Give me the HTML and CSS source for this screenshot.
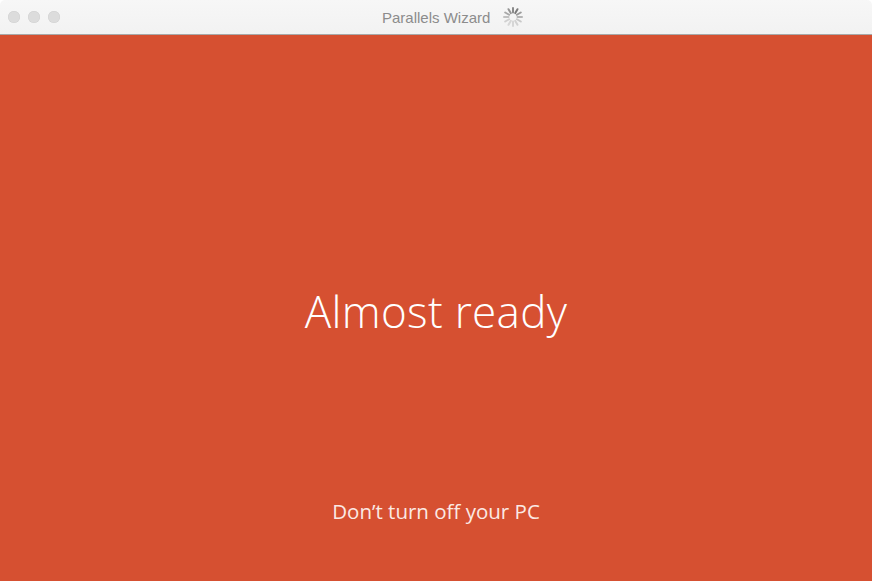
FILE: index.html
```html
<!DOCTYPE html>
<html>
<head>
<meta charset="utf-8">
<link rel="stylesheet" href="styles.css">
</head>
<body>
<div class="window">
  <div class="titlebar">
    <div class="lights">
      <span class="light"></span><span class="light"></span><span class="light"></span>
    </div>
    <div class="title">
      <span class="title-text">Parallels Wizard</span>
      <svg class="spinner" width="20" height="20" viewBox="-10 -10 20 20">
        <g stroke-width="2" stroke-linecap="round">
          <line x1="0" y1="-4.5" x2="0" y2="-9" stroke="#8a8a8a" transform="rotate(0)"/>
          <line x1="0" y1="-4.5" x2="0" y2="-9" stroke="#7a7a7a" transform="rotate(30)"/>
          <line x1="0" y1="-4.5" x2="0" y2="-9" stroke="#9a9a9a" transform="rotate(60)"/>
          <line x1="0" y1="-4.5" x2="0" y2="-9" stroke="#b5b5b5" transform="rotate(90)"/>
          <line x1="0" y1="-4.5" x2="0" y2="-9" stroke="#c8c8c8" transform="rotate(120)"/>
          <line x1="0" y1="-4.5" x2="0" y2="-9" stroke="#d2d2d2" transform="rotate(150)"/>
          <line x1="0" y1="-4.5" x2="0" y2="-9" stroke="#d6d6d6" transform="rotate(180)"/>
          <line x1="0" y1="-4.5" x2="0" y2="-9" stroke="#d6d6d6" transform="rotate(210)"/>
          <line x1="0" y1="-4.5" x2="0" y2="-9" stroke="#d0d0d0" transform="rotate(240)"/>
          <line x1="0" y1="-4.5" x2="0" y2="-9" stroke="#c0c0c0" transform="rotate(270)"/>
          <line x1="0" y1="-4.5" x2="0" y2="-9" stroke="#a8a8a8" transform="rotate(300)"/>
          <line x1="0" y1="-4.5" x2="0" y2="-9" stroke="#959595" transform="rotate(330)"/>
        </g>
      </svg>
    </div>
  </div>
  <div class="screen">
    <div class="main-text">Almost ready</div>
    <div class="sub-text">Don’t turn off your PC</div>
  </div>
</div>
</body>
</html>
```

FILE: styles.css
```css
html, body {
  margin: 0;
  padding: 0;
  width: 872px;
  height: 581px;
  overflow: hidden;
  background: #ffffff;
}
.window {
  width: 872px;
  height: 581px;
  display: flex;
  flex-direction: column;
}
.titlebar {
  height: 34px;
  flex: 0 0 34px;
  background: linear-gradient(#f7f7f7, #f2f2f2);
  border-bottom: 1px solid #a8a8a8;
  display: flex;
  align-items: center;
  position: relative;
  border-radius: 5px 5px 0 0;
}
.lights {
  display: flex;
  gap: 8px;
  padding-left: 8px;
}
.light {
  width: 12px;
  height: 12px;
  border-radius: 50%;
  background: #dcdcdc;
  box-shadow: inset 0 0 0 0.5px #d0d0d0;
}
.title {
  position: absolute;
  left: 382px;
  top: 0;
  height: 34px;
  display: flex;
  align-items: center;
  gap: 13px;
}
.title-text {
  font-family: "Liberation Sans", Arial, sans-serif;
  font-size: 15px;
  color: #8c8c8c;
  padding-top: 1px;
}
.spinner {
  display: block;
}
.screen {
  flex: 1;
  background: #d65031;
  display: flex;
  flex-direction: column;
  align-items: center;
  color: #ffffff;
  font-family: "Open Sans", "Noto Sans", sans-serif;
}
.main-text {
  font-weight: 300;
  font-size: 44px;
  margin-top: 248px;
  line-height: 56px;
  letter-spacing: 0.3px;
}
.sub-text {
  font-weight: 400;
  font-size: 20.5px;
  margin-top: 159px;
  line-height: 26px;
  color: #fbe9e4;
}
```
